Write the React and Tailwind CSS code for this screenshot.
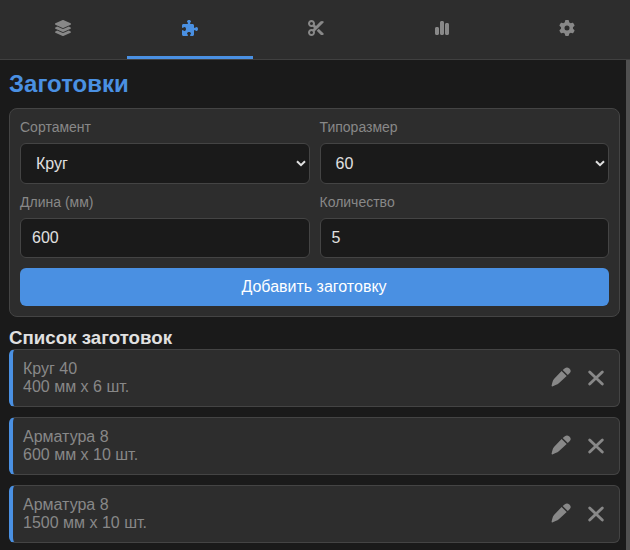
import { FaLayerGroup } from "react-icons/fa";
import { FaPuzzlePiece, FaScissors, FaChartSimple, FaGear } from "react-icons/fa6";

const tabs = [FaLayerGroup, FaPuzzlePiece, FaScissors, FaChartSimple, FaGear];

const blanks = [
  ["Круг 40", "400 мм x 6 шт."],
  ["Арматура 8", "600 мм x 10 шт."],
  ["Арматура 8", "1500 мм x 10 шт."],
];

function PencilIcon() {
  return (
    <svg viewBox="0 0 20 20" className="mb-0.5 h-5 w-5" fill="currentColor">
      <path d="M10.6 4 15.7 9.1 8.1 16.1Q6.6 17.4 4.6 18L1.3 19.4Q.5 19.6.6 18.6L1.5 15Q1.9 13.2 3.2 11.7Z" />
      <path d="M11.7 3 13.9 1.2Q16.1-.5 18.4 1.5 20.8 3.9 18.8 6L16.8 8.1Z" />
    </svg>
  );
}

function CrossIcon() {
  return (
    <svg viewBox="0 0 16 16" className="h-4 w-4" fill="none" stroke="currentColor" strokeWidth="2.8" strokeLinecap="round">
      <path d="M1.7 1.9 14.3 14.1M14.3 1.9 1.7 14.1" />
    </svg>
  );
}

function Label({ children }) {
  return <div className="h-[15px] text-sm leading-[15px] text-[#888]">{children}</div>;
}

function SelectField({ label, value }) {
  return (
    <label className="block">
      <Label>{label}</Label>
      <div className="mt-2 flex h-[41px] items-center justify-between rounded-md border border-[#444] bg-[#1a1a1a] pr-[3px] pl-[15px] text-base">
        <span>{value}</span>
        <svg viewBox="0 0 10 7" className="h-[7px] w-[10px]" fill="none" stroke="currentColor" strokeWidth="2">
          <path d="M1 1.2 5 5.2 9 1.2" />
        </svg>
      </div>
    </label>
  );
}

function InputField({ label, value }) {
  return (
    <label className="block">
      <Label>{label}</Label>
      <input
        defaultValue={value}
        className="mt-2 block h-10 w-full rounded-md border border-[#444] bg-[#1a1a1a] px-[11px] text-base outline-none"
      />
    </label>
  );
}

export default function App() {
  return (
    <div className="flex h-[550px] w-[630px] flex-col overflow-hidden bg-[#1a1a1a] font-['Liberation_Sans',Arial,sans-serif] text-[#e0e0e0]">
      <nav className="grid h-[60px] shrink-0 grid-cols-5 border-b border-[#404040] bg-[#2d2d2d]">
        {tabs.map((Icon, i) => (
          <button
            key={i}
            className={`flex items-center justify-center border-b-3 ${i > 0 && i < 4 ? "ml-px -mr-px" : ""} ${i === 1 ? "border-[#4a90e2] text-[#4a90e2]" : "border-transparent text-[#888]"}`}
          >
            <Icon size={16} />
          </button>
        ))}
      </nav>
      <div className="flex min-h-0 flex-1">
        <main className="w-[626px] pt-[10px] pr-[6px] pl-[9px]">
          <h1 className="h-[38px] text-2xl leading-7 font-bold text-[#4a90e2]">Заготовки</h1>
          <section className="h-[209px] rounded-lg border border-[#444] bg-[#2d2d2d] p-[10px]">
            <div className="grid grid-cols-2 gap-x-[10px] gap-y-[11px] pt-px">
              <SelectField label="Сортамент" value="Круг" />
              <SelectField label="Типоразмер" value="60" />
              <InputField label="Длина (мм)" value="600" />
              <InputField label="Количество" value="5" />
            </div>
            <button className="mt-[10px] block h-[38px] w-full rounded-md bg-[#4a90e2] pr-px text-base text-white">
              Добавить заготовку
            </button>
          </section>
          <h2 className="mt-[10px] h-[22px] text-[18.72px] leading-[22px] font-bold">Список заготовок</h2>
          <div className="flex flex-col gap-[10px]">
            {blanks.map(([name, size], i) => (
              <div
                key={i}
                className="flex h-[58px] items-center justify-between rounded-md border border-l-4 border-[#444] border-l-[#4a90e2] bg-[#2d2d2d] pr-[15px] pl-[10px] text-[#888]"
              >
                <div className="text-base leading-[18px]">
                  <div>{name}</div>
                  <div>{size}</div>
                </div>
                <div className="flex items-center gap-[17px]">
                  <PencilIcon />
                  <CrossIcon />
                </div>
              </div>
            ))}
          </div>
        </main>
        <div className="w-1 bg-[#505050]" />
      </div>
    </div>
  );
}
